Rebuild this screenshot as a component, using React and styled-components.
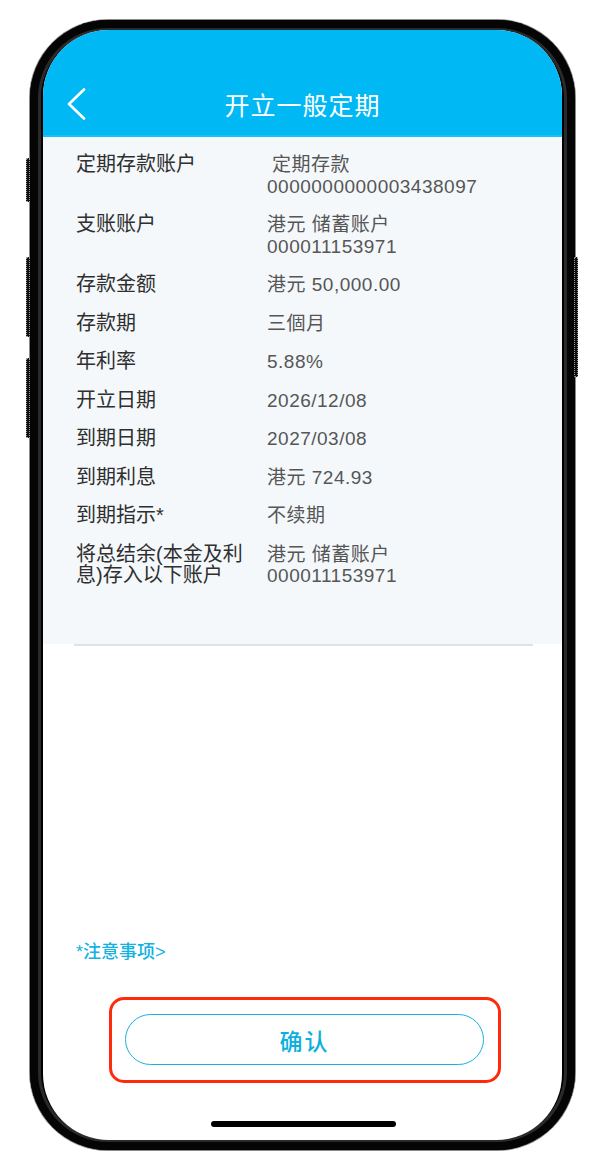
import React from 'react'
import styled, { createGlobalStyle } from 'styled-components'

const GlobalStyle = createGlobalStyle`
  html, body {
    margin: 0;
    padding: 0;
    background: #fff;
  }
  body {
    font-family: "Liberation Sans", "Noto Sans CJK SC", sans-serif;
  }
`

const Page = styled.div`
  width: 598px;
  height: 1170px;
  padding-top: 20px;
  box-sizing: border-box;
`

const Phone = styled.div`
  position: relative;
  margin-left: 30px;
  width: 545px;
  height: 1130px;
  box-sizing: border-box;
  padding: 10px 13px;
  border-radius: 78px;
  background: #000;
  box-shadow: 0 0 0 1px #8a8a8a, inset 0 0 0 8px #050505, inset 0 0 0 11px #2a2a2a;
`

const SideKey = styled.div`
  position: absolute;
  top: ${p => p.top}px;
  height: ${p => p.h}px;
  width: 4px;
  ${p => (p.right ? 'right: -3px;' : 'left: -4px;')}
  background: #111;
  border: 1px dotted #9a9a9a;
  border-radius: 1px;
  box-sizing: border-box;
`

const Screen = styled.div`
  height: 100%;
  border-radius: 66px;
  overflow: hidden;
  background: #fff;
  display: flex;
  flex-direction: column;
`

const Header = styled.div`
  height: 107px;
  flex-shrink: 0;
  background: #00b8f4;
  display: flex;
  flex-direction: column;
  justify-content: flex-end;
  padding-bottom: 5px;
  box-sizing: border-box;
  border-bottom: 2px solid #19c0f6;
`

const NavBar = styled.div`
  height: 52px;
  display: grid;
  grid-template-columns: 1fr auto 1fr;
  align-items: center;
`

const BackButton = styled.div`
  padding-left: 23px;
  display: flex;
  align-items: center;
`

const Title = styled.div`
  color: #fff;
  font-size: 25px;
  letter-spacing: 1px;
  font-family: "Noto Sans CJK SC", sans-serif;
`

const Panel = styled.div`
  background: #f4f8fb;
  padding: 17px 20px 51px 33px;
  height: 507px;
  box-sizing: border-box;
  flex-shrink: 0;
`

const Row = styled.div`
  display: grid;
  grid-template-columns: 181px 1fr;
  column-gap: 10px;
  margin-bottom: ${p => (p.last ? 0 : 17)}px;
`

const Label = styled.div`
  font-size: 20px;
  line-height: 21.5px;
  color: #2f2f2f;
`

const Value = styled.div`
  font-size: 19px;
  line-height: 21.5px;
  color: #565656;
  letter-spacing: 0.5px;
  padding-left: ${p => p.indent || 0}px;
`

const Divider = styled.div`
  height: 2px;
  margin: 0 29px 0 31px;
  background: #e0e2e4;
  flex-shrink: 0;
`

const Spacer = styled.div`
  flex: 1;
`

const Notice = styled.div`
  padding-left: 33px;
  font-size: 18px;
  line-height: 24px;
  color: #14b2e0;
  font-weight: 500;
`

const Highlight = styled.div`
  margin: 33px 0 0 66px;
  width: 392px;
  height: 86px;
  box-sizing: border-box;
  border: 3px solid #ff2a0c;
  border-radius: 15px;
  padding: 14px 13px;
`

const ConfirmButton = styled.button`
  width: 359px;
  height: 51px;
  border: 1.5px solid #17b1db;
  border-radius: 26px;
  background: #fff;
  color: #0bb0dc;
  font-size: 23px;
  font-weight: 500;
  font-family: "Noto Sans CJK SC", sans-serif;
  letter-spacing: 2px;
  display: flex;
  align-items: center;
  justify-content: center;
  padding: 0;
`

const HomeBar = styled.div`
  align-self: center;
  margin: 38px 0 13px 2px;
  width: 185px;
  height: 6px;
  border-radius: 3px;
  background: #000;
`

const rows = [
  { label: '定期存款账户', values: ['定期存款', '0000000000003438097'], indent: 5 },
  { label: '支账账户', values: ['港元 储蓄账户', '000011153971'] },
  { label: '存款金额', values: ['港元 50,000.00'] },
  { label: '存款期', values: ['三個月'] },
  { label: '年利率', values: ['5.88%'] },
  { label: '开立日期', values: ['2026/12/08'] },
  { label: '到期日期', values: ['2027/03/08'] },
  { label: '到期利息', values: ['港元 724.93'] },
  { label: '到期指示*', values: ['不续期'] },
  { label: '将总结余(本金及利息)存入以下账户', values: ['港元 储蓄账户', '000011153971'] },
]

const BackIcon = () => (
  <svg width="20" height="32" viewBox="0 0 20 32">
    <polyline points="18,1.5 3,16 18,30.5" fill="none" stroke="#fff" strokeWidth="2.6" strokeLinecap="round" strokeLinejoin="round" />
  </svg>
)

export default function App() {
  return (
    <Page>
      <GlobalStyle />
      <Phone>
        <SideKey top={138} h={44} />
        <SideKey top={237} h={80} />
        <SideKey top={338} h={80} />
        <SideKey right top={237} h={120} />
        <Screen>
          <Header>
            <NavBar>
              <BackButton>
                <BackIcon />
              </BackButton>
              <Title>开立一般定期</Title>
              <div />
            </NavBar>
          </Header>
          <Panel>
            {rows.map((r, i) => (
              <Row key={r.label} last={i === rows.length - 1}>
                <Label>{r.label}</Label>
                <div>
                  {r.values.map((v, j) => (
                    <Value key={v} indent={j === 0 ? r.indent : 0}>{v}</Value>
                  ))}
                </div>
              </Row>
            ))}
          </Panel>
          <Divider />
          <Spacer />
          <Notice>*注意事项&gt;</Notice>
          <Highlight>
            <ConfirmButton>确认</ConfirmButton>
          </Highlight>
          <HomeBar />
        </Screen>
      </Phone>
    </Page>
  )
}
